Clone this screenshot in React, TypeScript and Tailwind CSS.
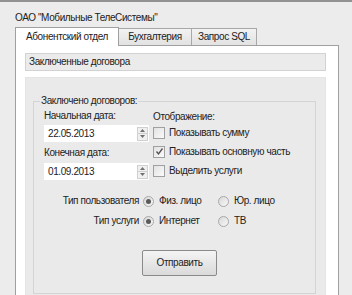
import React from "react";

function Spin() {
  return (
    <div className="flex h-[14px] w-[11px] flex-col border border-[#d0d0d0] bg-[#f0f0f0]">
      <div className="flex flex-1 items-center justify-center border-b border-[#d0d0d0]">
        <svg width="5" height="3" viewBox="0 0 5 3">
          <path d="M0 3 L2.5 0 L5 3 Z" fill="#707070" />
        </svg>
      </div>
      <div className="flex flex-1 items-center justify-center">
        <svg width="5" height="3" viewBox="0 0 5 3">
          <path d="M0 0 L2.5 3 L5 0 Z" fill="#707070" />
        </svg>
      </div>
    </div>
  );
}

function DateInput({ value }: { value: string }) {
  return (
    <div className="flex h-[17px] w-[105px] items-center justify-between bg-white pl-[4px] pr-[1px]">
      <span>{value}</span>
      <Spin />
    </div>
  );
}

function Check({ label, checked }: { label: string; checked?: boolean }) {
  return (
    <div className="flex h-[19px] items-center gap-[4px]">
      <div className="flex h-[12px] w-[12px] items-center justify-center border border-[#a0a0a0] bg-gradient-to-br from-[#e2e2e2] to-[#fafafa]">
        {checked && (
          <svg width="9" height="9" viewBox="0 0 9 9">
            <path d="M1.5 4.5 L3.5 7 L7.5 1.5" stroke="#505050" strokeWidth="1.3" fill="none" />
          </svg>
        )}
      </div>
      <span>{label}</span>
    </div>
  );
}

function Radio({ label, checked }: { label: string; checked?: boolean }) {
  return (
    <div className="flex w-[75px] items-center gap-[5px]">
      <div className="flex h-[11px] w-[11px] items-center justify-center rounded-full border border-[#a8a8a8] bg-gradient-to-br from-[#d8d8d8] to-[#f8f8f8]">
        {checked && <div className="h-[5px] w-[5px] rounded-full bg-[#5a5a5a]" />}
      </div>
      <span>{label}</span>
    </div>
  );
}

export default function App() {
  return (
    <div className="h-[295px] w-[352px] overflow-hidden border-t-2 border-[#929292] bg-[#ececec] font-['Liberation_Sans',Arial,sans-serif] text-[10px] leading-[14px] tracking-[-0.4px] text-[#222]">
      <div className="ml-[15px] mt-[9px] h-[16px]">ОАО "Мобильные ТелеСистемы"</div>

      <div className="ml-[15px] flex h-[18px] items-end">
        <div className="relative z-10 -mb-px flex h-[19px] w-[104px] items-center border border-b-0 border-[#a0a0a0] bg-white pl-[10px]">
          Абонентский отдел
        </div>
        <div className="flex h-[17px] w-[73px] items-center justify-center border border-b-0 border-l-0 border-[#a8a8a8] bg-gradient-to-b from-[#f2f2f2] to-[#e2e2e2]">
          Бухгалтерия
        </div>
        <div className="flex h-[17px] w-[65px] items-center justify-center border border-b-0 border-l-0 border-[#a8a8a8] bg-gradient-to-b from-[#f2f2f2] to-[#e2e2e2]">
          Запрос SQL
        </div>
      </div>

      <div className="ml-[15px] h-[260px] w-[324px] border border-[#a0a0a0] bg-white pl-[9px] pt-[7px]">
        <div className="flex h-[18px] w-[301px] items-center border border-[#d2d2d2] bg-[#ebebeb] pl-[3px]">
          Заключенные договора
        </div>

        <div className="mt-[6px] h-[240px] w-[301px] border border-[#e4e4e4] bg-[#eaeaea] px-[7px] pt-[16px]">
          <fieldset className="h-[200px] w-[283px] border border-[#d4d4d4]">
            <legend className="ml-[6px] px-[1px]">Заключено договоров:</legend>

            <div className="flex pl-[10px] pt-[1px]">
              <div className="flex w-[109px] flex-col">
                <div className="h-[16px]">Начальная дата:</div>
                <DateInput value="22.05.2013" />
                <div className="mt-[3px] h-[16px] leading-[16px]">Конечная дата:</div>
                <div className="mt-[2px]">
                  <DateInput value="01.09.2013" />
                </div>
              </div>
              <div className="flex flex-col">
                <div className="h-[14px] leading-[16px]">Отображение:</div>
                <Check label="Показывать сумму" />
                <Check label="Показывать основную часть" checked />
                <Check label="Выделить услуги" />
              </div>
            </div>

            <div className="mt-[11px] flex h-[20px] items-center">
              <div className="w-[109px] pr-[4px] text-right">Тип пользователя</div>
              <Radio label="Физ. лицо" checked />
              <Radio label="Юр. лицо" />
            </div>
            <div className="flex h-[20px] items-center">
              <div className="w-[109px] pr-[4px] text-right">Тип услуги</div>
              <Radio label="Интернет" checked />
              <Radio label="ТВ" />
            </div>

            <div className="mt-[19px] flex pl-[108px]">
              <button className="h-[26px] w-[75px] rounded-[2px] border border-[#8a8a8a] bg-gradient-to-b from-[#f4f4f4] to-[#dadada]">
                Отправить
              </button>
            </div>
          </fieldset>
        </div>
      </div>
    </div>
  );
}
